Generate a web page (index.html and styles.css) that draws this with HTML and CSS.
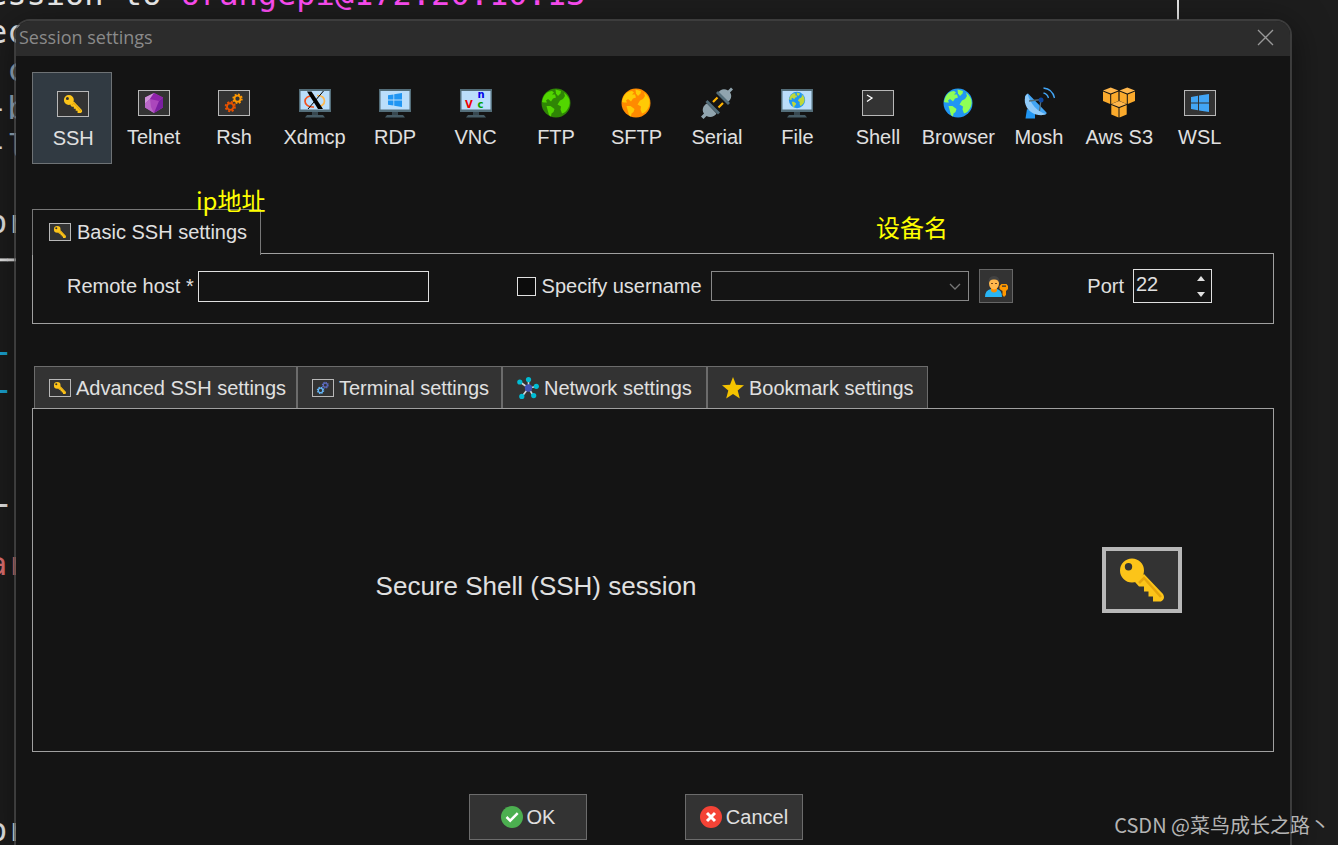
FILE: index.html
```html
<!DOCTYPE html>
<html lang="en">
<head>
<meta charset="utf-8">
<title>Session settings</title>
<link rel="stylesheet" href="styles.css">
</head>
<body>
<svg class="defs" aria-hidden="true">
  <symbol id="key" viewBox="4 4 72 58">
    <path fill="#fcc419" fill-rule="evenodd" d="M30 11.500a12 12 0 1 1 0 24a12 12 0 1 1 0-24zM26.500 16a3.700 3.700 0 1 0 0 7.400a3.700 3.700 0 1 0 0-7.400z"/>
    <path fill="#fcc419" d="M33 35l9-8 19 20q3 5-2 7.500h-8v-5h-4.500v-5H42v-5h-5z"/>
    <path fill="none" stroke="#e5a50d" stroke-width="2.500" d="M37 36l5-5 17 19"/>
  </symbol>
  <symbol id="gears" viewBox="1 1 30 24">
    <g class="gear-a" fill="none"><circle cx="19.500" cy="8.700" r="3" stroke-width="1.800"/><circle cx="19.500" cy="8.700" r="4.300" stroke-width="1.800" stroke-dasharray="1.850 1.520"/></g>
    <g class="gear-b" fill="none"><circle cx="12.300" cy="16.600" r="3.300" stroke-width="1.900"/><circle cx="12.300" cy="16.600" r="4.700" stroke-width="1.800" stroke-dasharray="2.050 1.640"/></g>
  </symbol>
  <symbol id="monitor" viewBox="0 0 32 32">
    <path fill="#546e7a" d="M0 2h32v23H0z"/>
    <path class="screen" d="M1.500 4h29v18.500h-29z"/>
    <path fill="#37474f" d="M13 25h6v3h-6z"/>
    <path fill="#455a64" d="M8 28h16l2 2.500H6z"/>
  </symbol>
  <symbol id="panes" viewBox="0 0 18 18">
    <path d="M0 3l7-1.200v6.700H0zM8 1.600L18 0v8.500H8zM0 9.500h7v6.700L0 15zM8 9.500h10V18L8 16.400z"/>
  </symbol>
  <symbol id="globe" viewBox="0 0 32 32">
    <circle class="sea" cx="16" cy="16" r="14.500"/>
    <g class="land">
      <path d="M3 11Q6 4 12 4l2 1.500-2 2h3l1 3-3 1-2 3-3-2.500-2 1.500 1 2H4l-2-.500z"/>
      <path d="M15.500 2.500l5.500 1.500-.500 2.500L18 9l-2-2.500z"/>
      <path d="M24 5.500q6 5 5.700 10.500-.700 6-5.200 9.500l-2.500 1-1.500-4 .500-3-3.500-2 2.500-4 3-1.500 2-3z"/>
      <path d="M6.500 19l4 0 4 3-1 3-2 1.500-.500 3-2-1.500z"/>
    </g>
  </symbol>
</svg>

<div class="terminal" aria-hidden="true"><pre class="lines">ession to <span class="pink">orangepi@172.20.10.13</span>
ec
 <i>c</i>
-<i>b</i>
-<i>l</i>

or
<b>──</b>

<span class="cyan">_</span>
<span class="cyan">_</span>


<b>_</b>

<span class="red">ar</span>






or</pre><span class="rule"></span></div>

<main class="dialog">
  <header class="titlebar">
    <h1>Session settings</h1>
    <button class="close" aria-label="Close"><svg viewBox="0 0 15 15"><path d="M0 0l15 15M15 0L0 15"/></svg></button>
  </header>

  <div class="content">
    <nav class="types" aria-label="Session type">
      <button class="type selected"><span class="slot"><svg class="frame"><use href="#key"/></svg></span>SSH</button>
      <button class="type"><span class="slot"><svg class="frame" viewBox="1 1 30 24"><path fill="#ab47bc" d="M16 3l9 4.500v10L16 23l-9-5.500v-10z"/><path fill="#ce93d8" d="M16 3L7 7.500v6L12 9z"/><path fill="#ba68c8" d="M7 13.500L12 9l1 8 3 6-9-5.500z"/><path fill="#7b1fa2" d="M25 7.500l-4 3.500-5 12 9-5.500z"/><path fill="#8e24aa" d="M16 3l9 4.500-4 3.500-9-2z"/></svg></span>Telnet</button>
      <button class="type"><span class="slot"><svg class="frame warm"><use href="#gears"/></svg></span>Rsh</button>
      <button class="type"><span class="slot"><svg class="icon" viewBox="0 0 32 32"><use href="#monitor"/><g fill="none" stroke-width="1.700"><path stroke="#f4511e" d="M15 8.500C3 8 3 20.500 15 20"/><path stroke="#ffb74d" d="M18 8.500c10-.500 10 11 0 11.500"/></g><path d="M8 4.500h4.500L24 22h-5z"/><path stroke="#000" d="M24.500 4L9 22" fill="none"/></svg></span>Xdmcp</button>
      <button class="type"><span class="slot"><svg class="icon" viewBox="0 0 32 32"><use href="#monitor"/><use class="blue" href="#panes" x="8.500" y="6" width="15" height="14"/></svg></span>RDP</button>
      <button class="type"><span class="slot"><svg class="icon pale" viewBox="0 0 32 32"><use href="#monitor"/><text class="vnc" x="5" y="21" fill="#f00000">V</text><text class="vnc" x="17.500" y="11" fill="#0000e8">n</text><text class="vnc" x="17.500" y="21" fill="#00a000">c</text></svg></span>VNC</button>
      <button class="type"><span class="slot"><svg class="icon green"><use href="#globe"/></svg></span>FTP</button>
      <button class="type"><span class="slot"><svg class="icon orange"><use href="#globe"/></svg></span>SFTP</button>
      <button class="type"><span class="slot"><svg class="icon" viewBox="0 0 32 32"><path fill="#90a4ae" d="M32 2.500L30 .500l-3 3C23 1 19 2.500 17 6l9 9.500c4-2.500 5.500-6.500 3-10zM0 29.500l2.500 2.500 3-3c4 2 8 .500 10-2.500L6 16.500C2 18.500.500 23 3 26.500z"/><path fill="#546e7a" d="M15 6l2-2 12 12-2 2zM4.500 15l2-2L19 25.500l-2 2z"/><path stroke="#ffb300" stroke-width="2.200" d="M16.500 10.500L12 15M22 16l-4.500 4.500"/></svg></span>Serial</button>
      <button class="type"><span class="slot"><svg class="icon file" viewBox="0 0 32 32"><use href="#monitor"/><use href="#globe" x="7" y="4" width="18" height="18"/></svg></span>File</button>
      <button class="type"><span class="slot"><svg class="frame" viewBox="1 1 30 24"><path fill="none" stroke="#fff" stroke-width="1.300" d="M5 5l5 3-5 3.500"/></svg></span>Shell</button>
      <button class="type"><span class="slot"><svg class="icon world"><use href="#globe"/></svg></span>Browser</button>
      <button class="type"><span class="slot"><svg class="icon" viewBox="0 0 32 32"><path fill="#2196f3" d="M4 22l8 4v5.500H2.500z"/><path fill="#42a5f5" d="M5 6.500L23 25c2 2-1 3-5 2.500C9 27 1 18 2 9z"/><path fill="#90caf9" d="M4.500 6.500C0 10 1 20 8 25c5 3.500 12 4 15 2C15 25 7 17 4.500 6.500z"/><path fill="none" stroke="#546e7a" stroke-width="1.300" d="M6 14l12-1.500L16.500 24"/><circle cx="18" cy="13" r="2.500" fill="#0d47a1"/><path fill="none" stroke="#42a5f5" stroke-width="1.300" d="M20.500 6q4 1 5 5M20.500 1q9 1 11 10"/></svg></span>Mosh</button>
      <button class="type"><span class="slot"><svg class="icon" viewBox="0 0 32 32"><defs><g id="cube"><path fill="#ffb74d" d="M0 3L7.700 0l7.700 3-7.700 3z"/><path fill="#fbaa2c" d="M0 4l7.200 3v9.500L0 13.500zM8.200 7l7.200-3v9.500l-7.200 3z"/></g></defs><use href="#cube" x="0" y="0.500"/><use href="#cube" x="16.600" y="0.500"/><use href="#cube" x="8.300" y="14"/></svg></span>Aws S3</button>
      <button class="type"><span class="slot"><svg class="frame" viewBox="1 1 30 24"><use class="blue" href="#panes" x="7" y="4" width="18" height="18"/></svg></span>WSL</button>
    </nav>

    <section class="basic">
      <h2 class="basic-tab"><svg class="frame small"><use href="#key"/></svg>Basic SSH settings</h2>
      <form class="basic-panel">
        <div class="field host"><label for="host">Remote host *</label><input id="host" class="box" type="text"></div>
        <div class="field user">
          <input id="specify" type="checkbox"><label for="specify">Specify username</label>
          <span class="combo"><select aria-label="Username" disabled><option></option></select><svg viewBox="0 0 12 7"><path d="M1 1l5 5 5-5"/></svg></span>
          <button type="button" class="usermgr" aria-label="Manage users"><svg viewBox="0 0 24 24"><path fill="#29b6f6" d="M1 23q0-7 6-8h6q5 1 5 8z"/><path fill="#fb8c00" d="M7 12h6v5q-3 3-6 0z"/><ellipse cx="10" cy="9.500" rx="5" ry="6" fill="#ffb74d"/><path fill="#424242" d="M4.500 9Q4 2 10 2t5.500 7Q14 5 10 5.500 6 5 4.500 9z"/><path stroke="#784719" d="M7 9.500h2M11 9.500h2"/><path fill="#ff9800" fill-rule="evenodd" d="M15.500 12l2-2h5l1.500 2v3l-2 2v4l-2 2-1.500-2v-4l-3-2zM18 11.500h4v1.300h-4z"/></svg></button>
        </div>
        <div class="field port"><label for="port">Port</label>
          <span class="spinner"><input id="port" type="text" inputmode="numeric" value="22"><span class="arrows"><button type="button" aria-label="Increase"><svg viewBox="0 0 8 5"><path d="M0 5l4-5 4 5z"/></svg></button><button type="button" aria-label="Decrease"><svg viewBox="0 0 8 5"><path d="M0 0l4 5 4-5z"/></svg></button></span></span>
        </div>
      </form>
      <span class="note note-ip">ip地址</span>
      <span class="note note-user">设备名</span>
    </section>

    <div class="tabs" role="tablist">
      <button class="tab" role="tab"><svg class="frame small"><use href="#key"/></svg>Advanced SSH settings</button>
      <button class="tab" role="tab"><svg class="frame small cool"><use href="#gears"/></svg>Terminal settings</button>
      <button class="tab" role="tab"><svg class="glyph" viewBox="0 0 22 22"><path stroke="#cfd8dc" stroke-width="1.600" d="M11.500 11L3 5M11.500 11V3M11.500 11l8-1.500M11.500 11L5 19.500M11.500 11l5 8"/><circle cx="11.500" cy="11" r="3.700" fill="#3f51b5"/><g fill="#00bcd4"><circle cx="2.800" cy="5" r="2.600"/><circle cx="11.500" cy="2.600" r="2.600"/><circle cx="19.300" cy="9.300" r="2.600"/><circle cx="4.800" cy="19.400" r="2.600"/><circle cx="16.700" cy="18.600" r="2.600"/></g></svg>Network settings</button>
      <button class="tab" role="tab"><svg class="glyph" viewBox="0 0 22 22"><path fill="#f4c300" d="M11 0l3 7.800 8 .400-6.300 5.300 2.100 8-6.800-4.400-6.800 4.400 2.100-8L0 8.200l8-.400z"/></svg>Bookmark settings</button>
    </div>
    <section class="pane">
      <p>Secure Shell (SSH) session</p>
      <svg class="frame large"><use href="#key"/></svg>
    </section>

    <footer class="actions">
      <button class="action"><svg class="glyph" viewBox="0 0 22 22"><circle cx="11" cy="11" r="11" fill="#4caf50"/><path fill="none" stroke="#fff" stroke-width="2.500" d="M5.500 11l3.700 3.700 7.500-7.500"/></svg>OK</button>
      <button class="action"><svg class="glyph" viewBox="0 0 22 22"><circle cx="11" cy="11" r="11" fill="#f44336"/><path stroke="#fff" stroke-width="3" d="M7 7l8 8M15 7l-8 8"/></svg>Cancel</button>
    </footer>
  </div>
</main>
<span class="watermark">CSDN @菜鸟成长之路丶</span>
</body>
</html>
```

FILE: styles.css
```css
* { box-sizing: border-box; }
body {
  margin: 0;
  min-height: 100vh;
  position: relative;
  overflow: hidden;
  background: #1d1d1d;
  color: #e0e0e0;
  font: 20px/24px "Liberation Sans", Arial, sans-serif;
}
button, input, select { font: inherit; color: inherit; margin: 0; padding: 0; border: 0; background: none; border-radius: 0; }
.defs { position: absolute; width: 0; height: 0; }

/* terminal behind the dialog */
.terminal { position: absolute; inset: 0; overflow: hidden; }
.lines { position: absolute; left: -12px; top: -25px; margin: 0; font: 32px/38px "DejaVu Sans Mono", monospace; color: #ececec; }
.lines i { font-style: normal; color: #9db4c8; }
.pink { color: #ff4df5; }
.cyan { color: #1ba8d8; font-weight: bold; }
.red { color: #e57373; }
.rule { position: absolute; left: 1177px; top: 0; width: 2px; height: 20px; background: #e8e8e8; }

.dialog {
  position: relative;
  margin: 19px 46px 0 14px;
  min-height: calc(100vh - 19px);
  display: flex;
  flex-direction: column;
  border: 2px solid rgba(76, 76, 76, .7);
  border-bottom: 0;
  border-radius: 16px 16px 0 0;
  overflow: hidden;
  background: #141414 padding-box;
  box-shadow: 0 8px 36px rgba(0, 0, 0, .5);
}
.titlebar { display: flex; align-items: center; justify-content: space-between; height: 35px; padding: 0 17px 3px 3px; background: #2c2c2c; }
.titlebar h1 { margin: 0; font: 18px/24px "Open Sans", "Noto Sans", sans-serif; color: #8a8a8a; }
.close { display: flex; }
.close svg { width: 15px; height: 15px; overflow: visible; stroke: #999; stroke-width: 1.3; }
.content { flex: 1; display: flex; flex-direction: column; padding: 16px 16px 5px; }

/* session type strip */
.types { display: grid; grid-template-columns: repeat(15, minmax(0, 1fr)); margin-right: 35px; }
.type { display: flex; flex-direction: column; align-items: center; gap: 6px; height: 92px; padding: 14px 0 0 2px; border: 1px solid transparent; white-space: nowrap; }
.type.selected { padding-top: 15px; background: #313a42; border-color: #6e7275; }
.slot { display: flex; align-items: center; justify-content: center; width: 32px; height: 32px; }
.icon { width: 32px; height: 32px; overflow: visible; }
.frame { flex: none; width: 32px; height: 26px; border: 1px solid #b8b8b8; background: #333; }
.frame.small { width: 22px; height: 18px; }
.frame.large { width: 80px; height: 66px; border-width: 4px; }
.glyph { flex: none; width: 22px; height: 22px; }
.screen { fill: #bbdefb; }
.pale .screen { fill: #dcebfa; }
.blue { fill: #2196f3; }
.frame .blue { fill: #42a5f5; }
.vnc { font: bold 10px/10px "DejaVu Sans", sans-serif; }
.warm { --a: #ff9800; --b: #e65100; }
.cool { --a: #5c6bc0; --b: #64b5f6; }
.gear-a { stroke: var(--a); }
.gear-b { stroke: var(--b); }
.green { --sea: #2f8505; --land: #52d600; }
.orange { --sea: #ff8a00; --land: #ffca05; }
.world { --sea: #2196f3; --land: #8fff55; }
.file { --sea: #2196f3; --land: #c0d838; }
.sea { fill: var(--sea); }
.land { fill: var(--land); }

/* basic settings */
.basic { position: relative; margin-top: 45px; }
.basic-tab { position: relative; z-index: 1; display: flex; align-items: center; gap: 6px; width: 229px; height: 46px; margin: 0 0 -2px; padding: 0 0 2px 16px; border: 1px solid #777; border-width: 1px 1px 0 1px; background: #141414; font: inherit; white-space: nowrap; }
.basic-panel { display: flex; align-items: center; min-height: 71px; margin: 0; padding: 0 61px 5px 34px; border: 1px solid #a0a0a0; }
.field { display: flex; align-items: center; min-width: 0; white-space: nowrap; }
.host { flex: 361 1 0; gap: 4px; }
.user { flex: 496 1 0; margin: 0 74px 0 88px; }
.port { gap: 9px; }
.box { flex: 1; min-width: 0; height: 31px; border: 1px solid #e0e0e0; padding: 0 4px; }
.user input { appearance: none; width: 19px; height: 19px; margin-right: 6px; border: 1px solid #e0e0e0; background: #0c0c0c; }
.combo { position: relative; flex: 1; display: flex; margin: 0 10px 0 9px; }
.combo select { appearance: none; width: 100%; height: 30px; border: 1px solid #888; opacity: 1; }
.combo svg { position: absolute; right: 8px; top: 12px; width: 12px; height: 7px; fill: none; stroke: #777; stroke-width: 1.3; }
.usermgr { display: flex; align-items: center; justify-content: center; width: 34px; height: 34px; border: 1px solid #666; background: #333; }
.usermgr svg { width: 24px; height: 24px; }
.spinner { display: flex; width: 79px; height: 34px; padding: 0 6px 4px 2px; border: 1px solid #e0e0e0; }
.spinner input { flex: 1; min-width: 0; }
.arrows { display: flex; flex-direction: column; justify-content: space-between; padding: 6px 0 1px; }
.arrows button { display: flex; }
.arrows svg { width: 8px; height: 5px; fill: #e0e0e0; }
.note { position: absolute; z-index: 2; font: 24px/28px "Noto Sans CJK SC", sans-serif; color: #ff0; }
.note-ip { left: 164px; top: -23px; }
.note-user { left: 844px; top: 4px; }

/* advanced settings */
.tabs { display: grid; grid-template-columns: 263px 205px 205px 221px; margin: 42px 0 0 2px; }
.tab { display: flex; align-items: center; gap: 5px; height: 42px; padding: 0 0 0 14px; border: 1px solid #6c6c6c; border-bottom: 0; background: #333; white-space: nowrap; }
.pane { flex: 1; display: flex; align-items: center; min-height: 160px; padding-right: 91px; border: 1px solid #a0a0a0; }
.pane p { flex: 1; margin: 12px 63px 0 0; text-align: center; font-size: 26px; line-height: 32px; }
.actions { display: flex; justify-content: center; gap: 98px; margin-top: 42px; padding-right: 34px; }
.action { display: flex; align-items: center; justify-content: center; gap: 4px; width: 118px; height: 46px; border: 1px solid #6c6c6c; background: #333; }

.watermark { position: absolute; right: 8px; bottom: 6px; font: 20px/28px "Noto Sans CJK SC", sans-serif; color: #b4b4b4; }
```
